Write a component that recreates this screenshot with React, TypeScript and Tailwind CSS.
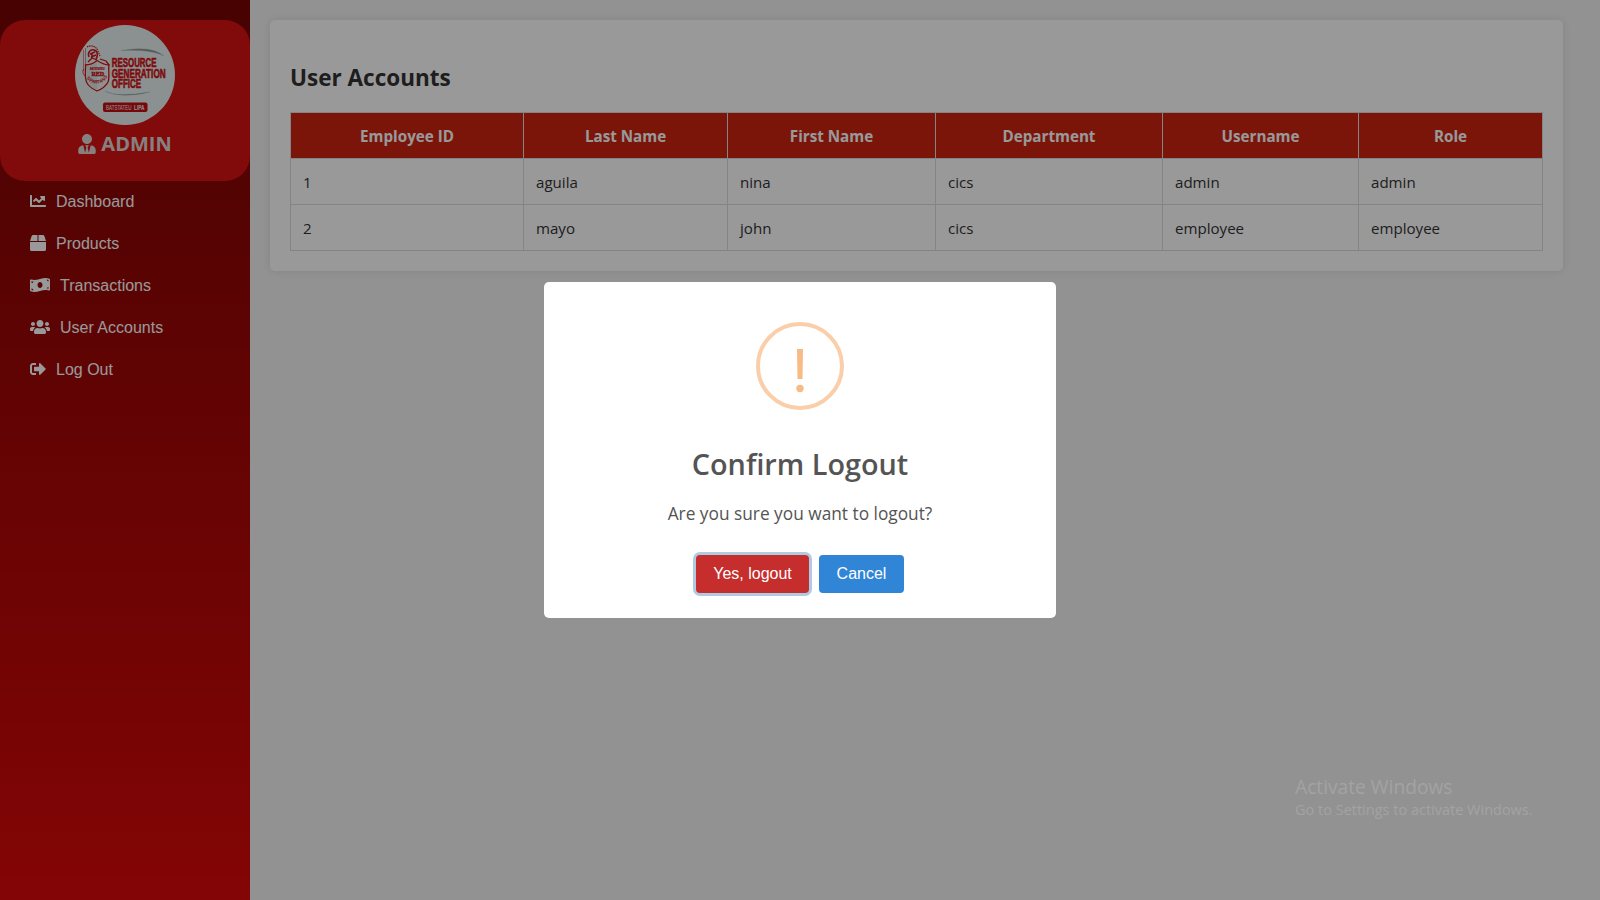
import { FaBox, FaChartLine, FaMoneyBillWave, FaSignOutAlt, FaUsers, FaUserTie } from "react-icons/fa";

const navItems = [
  { label: "Dashboard", icon: <FaChartLine className="mb-0.5 size-4" /> },
  { label: "Products", icon: <FaBox className="mb-0.5 size-4" /> },
  { label: "Transactions", icon: <FaMoneyBillWave className="mb-0.5 h-4 w-5" /> },
  { label: "User Accounts", icon: <FaUsers className="mb-0.5 h-4 w-5" /> },
  { label: "Log Out", icon: <FaSignOutAlt className="mb-0.5 size-4" /> },
];

const headers = ["Employee ID", "Last Name", "First Name", "Department", "Username", "Role"];

const rows = [
  ["1", "aguila", "nina", "cics", "admin", "admin"],
  ["2", "mayo", "john", "cics", "employee", "employee"],
];

function Logo() {
  return (
    <svg viewBox="0 0 100 100" className="size-[100px] rounded-full bg-[#e8f2f2]">
      <path d="M46 25.500 Q77 20 89 31 Q77 24.500 46 25.500 Z M30 66 Q40 72.500 75 67 Q46 74 30 66 Z" fill="#8d9494" stroke="#a5adad" strokeWidth="0.300" />
      <g fill="none" stroke="#d01216" strokeWidth="0.800">
        <path d="M8.500 25 V46 M10.500 23 V44" opacity="0.600" />
        <path d="M12 22 C15 20 20 21 22 24 L25 31" strokeWidth="1.200" strokeDasharray="1.500 0.700" />
        <path d="M14 32 C12 27 16 24 19 25 C23 26 23 31 21 34 M15 29 L20 27 M16 32 L21 30 M17 28 V33" strokeWidth="1.500" />
        <path d="M13 37 L17 33 L22 35 M25 34 L31 36 L34 40" strokeWidth="1.300" />
        <path d="M9 44 C7 46 8 49 10 51" />
        <path d="M22 35.500 C18 39 14 40 10.500 40 C11 46 9 52 12 58 C14 62 18 64 22 66 C27 64 31 61 33 57 C35 52 33 45 34 40 C30 40 26 38 22 35.500 Z" fill="#eef2f2" strokeWidth="1.300" />
      </g>
      <path d="M22 37 V65 C17 63 14 61 13 57 C11 52 12 46 12 41 C16 41 19 39 22 37 Z" fill="#dce4e4" />
      <g fill="#d01216" fontFamily="Liberation Sans, sans-serif" fontWeight="700">
        <text x="15" y="44.500" fontSize="3.200" textLength="14.500" lengthAdjust="spacingAndGlyphs" stroke="#d01216" strokeWidth="0.200">BATSTATEU</text>
        <text x="16.500" y="51" fontSize="6" textLength="12.500" lengthAdjust="spacing" fontFamily="Liberation Serif, serif" stroke="#d01216" strokeWidth="0.400">RED</text>
        <text fontSize="4.600">
          <tspan x="11.500 14 16.500 19.300 22 24.800 27.500 30" y="53.500 56 57.500 58.300 58.500 58 56.500 54" rotate="35 25 15 5 -5 -15 -25 -35">SPARTANS</tspan>
        </text>
        <text fontSize="12" transform="scale(0.700 1)" stroke="#d01216" strokeWidth="0.600">
          <tspan x="52.500" y="42.200" textLength="64" lengthAdjust="spacingAndGlyphs">RESOURCE</tspan>
          <tspan x="52.500" y="52.700" textLength="77" lengthAdjust="spacingAndGlyphs">GENERATION</tspan>
          <tspan x="52.500" y="63" textLength="42" lengthAdjust="spacingAndGlyphs">OFFICE</tspan>
        </text>
      </g>
      <rect x="28" y="77.500" width="44.500" height="9.500" rx="2" fill="#c80d12" />
      <text fill="#eaf4f4" fontFamily="Liberation Sans, sans-serif" fontSize="7.400">
        <tspan x="31" y="85" textLength="25.500" lengthAdjust="spacingAndGlyphs">BATSTATEU</tspan>
        <tspan x="59" y="85" textLength="10.500" lengthAdjust="spacingAndGlyphs" fontWeight="700">LIPA</tspan>
      </text>
    </svg>
  );
}

function Sidebar() {
  return (
    <aside className="flex w-[250px] shrink-0 flex-col bg-linear-to-b from-[#780404] to-[#dc0909] pt-5 text-white">
      <div className="flex h-[161px] flex-col items-center rounded-[25px] bg-[#d81111] pt-[5px]">
        <Logo />
        <div className="mt-[5px] flex items-center gap-[5px] text-[#e2d6d6]">
          <FaUserTie className="h-5 w-[18px]" />
          <span className="font-['Open_Sans',sans-serif] text-[20px] leading-7 font-bold">ADMIN</span>
        </div>
      </div>
      <nav className="font-['Liberation_Sans',sans-serif] text-base leading-[18px]">
        {navItems.map((item) => (
          <a key={item.label} className="flex h-[42px] items-center gap-2.5 pl-[30px]">
            {item.icon}
            <span>{item.label}</span>
          </a>
        ))}
      </nav>
    </aside>
  );
}

function AccountsTable() {
  return (
    <table className="w-[1253px] table-fixed border-collapse text-[15px] leading-[21px]">
      <colgroup>
        <col className="w-[233px]" />
        <col className="w-[204px]" />
        <col className="w-[208px]" />
        <col className="w-[227px]" />
        <col className="w-[196px]" />
        <col className="w-[184px]" />
      </colgroup>
      <thead>
        <tr className="h-[46px] bg-[#cd2311] text-white">
          {headers.map((h) => (
            <th key={h} className="border border-[#dddddd] px-3 pt-[13px] pb-[11px] text-center text-[15.2px] font-bold">{h}</th>
          ))}
        </tr>
      </thead>
      <tbody>
        {rows.map((row) => (
          <tr key={row[0]} className="h-[46px]">
            {row.map((cell, i) => (
              <td key={i} className="border border-[#dddddd] px-3 pt-[13px] pb-[11px] text-[15.1px]">{cell}</td>
            ))}
          </tr>
        ))}
      </tbody>
    </table>
  );
}

function LogoutDialog() {
  return (
    <div className="flex h-[336px] w-[512px] flex-col items-center rounded-[5px] bg-white pt-10 text-[#545454]">
      <svg viewBox="0 0 88 88" className="size-[88px]">
        <circle cx="44" cy="44" r="42" fill="none" stroke="#facea8" strokeWidth="4" />
        <path d="M41 27 H47 L46.500 57 H41.500 Z" fill="#f8bb86" />
        <circle cx="44" cy="66.500" r="3.700" fill="#f8bb86" />
      </svg>
      <h2 className="mt-[34px] text-[28.8px] leading-[40px] font-semibold">Confirm Logout</h2>
      <p className="mt-[17px] text-[17.3px] leading-[26px]">Are you sure you want to logout?</p>
      <div className="mt-[28px] flex gap-2.5 font-['Liberation_Sans',sans-serif] text-base text-white">
        <button className="h-[38px] w-[113px] rounded-[4px] bg-[#c62d2d] ring-3 ring-[#b1cae4]">Yes, logout</button>
        <button className="h-[38px] w-[85px] rounded-[4px] bg-[#3085d6]">Cancel</button>
      </div>
    </div>
  );
}

export default function App() {
  return (
    <div className="relative h-[900px] w-[1600px] overflow-hidden font-['Open_Sans',sans-serif]">
      <div className="flex h-full bg-[#f4f4f4]">
        <Sidebar />
        <main className="p-5">
          <section className="h-[251px] w-[1293px] rounded-[5px] bg-white px-5 pt-[41px] text-[#333333] shadow-[0_0_10px_rgba(0,0,0,0.1)]">
            <h2 className="mb-[18px] text-[22.5px] leading-[33px] font-bold">User Accounts</h2>
            <AccountsTable />
          </section>
        </main>
      </div>
      <div className="absolute inset-0 flex items-center justify-center bg-black/40">
        <LogoutDialog />
      </div>
      <div className="absolute top-[774px] left-[1295px] text-[#a3a3a3]">
        <p className="text-[19.2px] leading-[26px]">Activate Windows</p>
        <p className="text-[14.5px] leading-[20px]">Go to Settings to activate Windows.</p>
      </div>
    </div>
  );
}
